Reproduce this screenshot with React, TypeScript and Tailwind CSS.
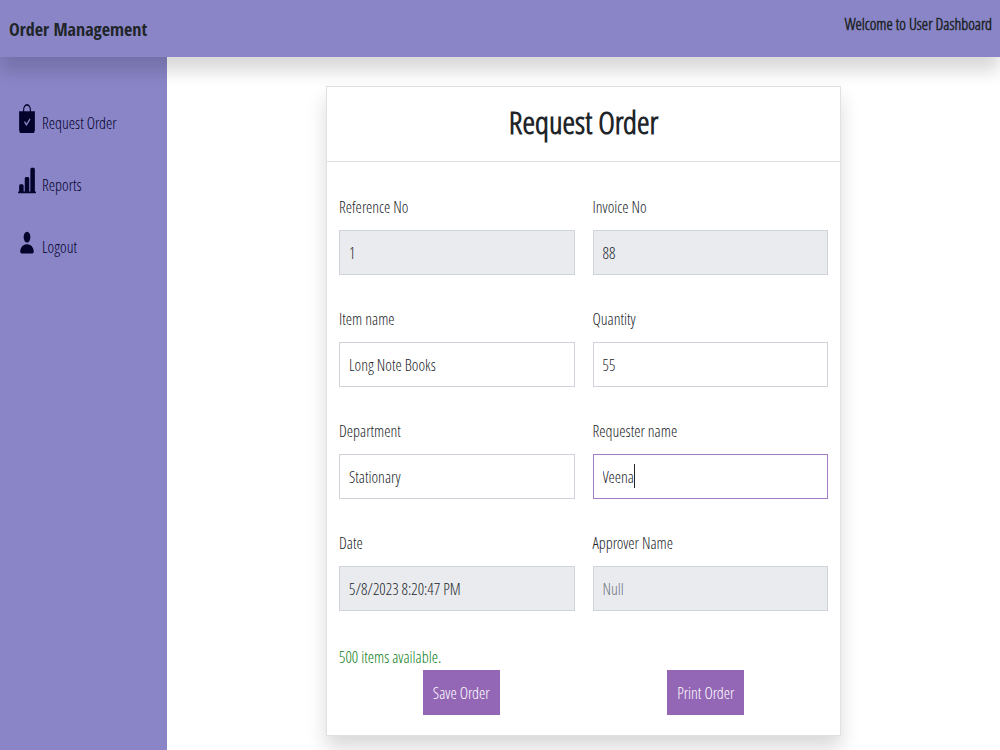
import { BsBagCheckFill, BsBarChartLineFill, BsPersonFill } from "react-icons/bs";

const links = [
  { label: "Request Order", icon: BsBagCheckFill },
  { label: "Reports", icon: BsBarChartLineFill },
  { label: "Logout", icon: BsPersonFill },
];

const fields = [
  { id: "reference", label: "Reference No", value: "1", disabled: true },
  { id: "invoice", label: "Invoice No", value: "88", disabled: true },
  { id: "item", label: "Item name", value: "Long Note Books" },
  { id: "quantity", label: "Quantity", value: "55" },
  { id: "department", label: "Department", value: "Stationary" },
  { id: "requester", label: "Requester name", value: "Veena", active: true },
  { id: "date", label: "Date", value: "5/8/2023 8:20:47 PM", disabled: true },
  { id: "approver", label: "Approver Name", placeholder: "Null", disabled: true },
];

function Navbar() {
  return (
    <header className="relative z-10 flex h-[57px] items-start justify-between bg-[#8985c7] px-2 shadow-[0_14px_16px_rgba(0,0,0,0.15)]">
      <h1 className="py-4 pl-px font-['Open_Sans_Condensed','Open_Sans',sans-serif] text-[18px] leading-[26px] font-bold">
        Order Management
      </h1>
      <p className="py-3 leading-6 font-semibold">Welcome to User Dashboard</p>
    </header>
  );
}

function Sidebar() {
  return (
    <nav className="w-[167px] shrink-0 bg-[#8985c7] pt-[47px] pl-[18px]">
      <ul className="flex flex-col gap-[30px]">
        {links.map(({ label, icon: Icon }) => (
          <li key={label}>
            <a href="#" className="flex h-8 items-start gap-[6px] text-[#03032b]">
              <Icon preserveAspectRatio="none" className="h-[29px] w-[18px]" />
              <span className="pt-[7px] leading-6">{label}</span>
            </a>
          </li>
        ))}
      </ul>
    </nav>
  );
}

function OrderForm() {
  return (
    <form className="px-3 pt-[33px] pb-5">
      <div className="grid grid-cols-2 gap-x-[18px] gap-y-8">
        {fields.map((field) => (
          <div key={field.id}>
            <label htmlFor={field.id} className="mb-[11px] block leading-6">
              {field.label}
            </label>
            <div className="relative">
              <input
                id={field.id}
                type="text"
                defaultValue={field.value}
                placeholder={field.placeholder}
                disabled={field.disabled}
                className={`block h-[45px] w-full border bg-white px-[9px] outline-none placeholder:text-[#6c757d] disabled:bg-[#e9ebef] ${
                  field.active ? "border-[#a47cc2]" : "border-[#ced4da]"
                }`}
              />
              {field.active && (
                <span className="absolute top-[10px] left-[41px] h-6 w-px bg-[#212529]" />
              )}
            </div>
          </div>
        ))}
      </div>
      <p className="mt-[33px] leading-[26px] text-[#0b7d17]">500 items available.</p>
      <div className="flex justify-around">
        <button type="button" className="h-[45px] w-[77px] bg-[#9467b6] text-white">
          Save Order
        </button>
        <button type="button" className="h-[45px] w-[77px] bg-[#9467b6] text-white">
          Print Order
        </button>
      </div>
    </form>
  );
}

export default function App() {
  return (
    <div className="flex min-h-screen flex-col bg-white font-['Open_Sans_Condensed_Light','Open_Sans',sans-serif] text-[16px] text-[#212529]">
      <Navbar />
      <div className="flex flex-1">
        <Sidebar />
        <main className="flex flex-1 items-start justify-center px-4 pt-[29px] pb-[14px]">
          <section className="w-full max-w-[515px] border border-[#dfe1e2] bg-white shadow-[0_12px_18px_rgba(0,0,0,0.15)]">
            <h2 className="border-b border-[#dfe3e5] pt-[14px] pb-[18px] text-center text-[32px] leading-[42px] font-semibold">
              Request Order
            </h2>
            <OrderForm />
          </section>
        </main>
      </div>
    </div>
  );
}
